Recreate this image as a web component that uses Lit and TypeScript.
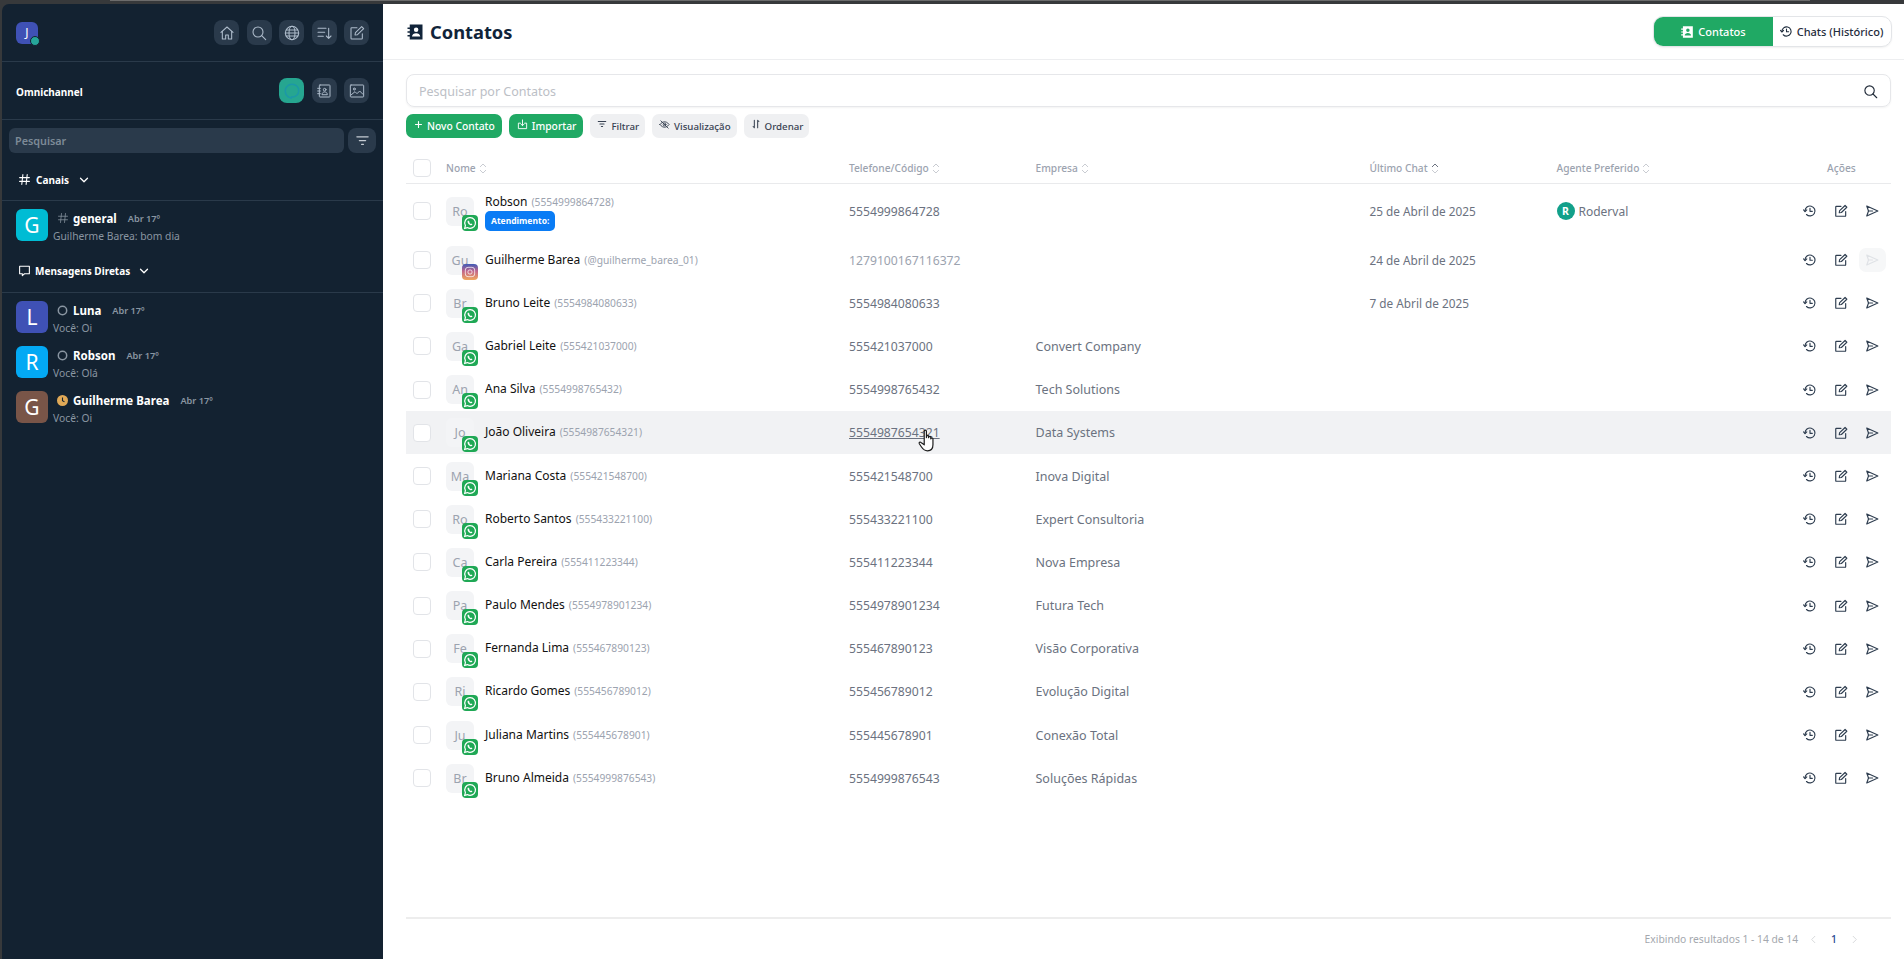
import { LitElement, html, css, svg } from 'lit';
import { customElement } from 'lit/decorators.js';

const ico = (body: unknown, size = 16, sw = 1.8) => html`<svg width=${size} height=${size} viewBox="0 0 24 24" fill="none" stroke="currentColor" stroke-width=${sw} stroke-linecap="round" stroke-linejoin="round">${body}</svg>`;

const home = svg`<path d="M3 11 12 3l9 8"/><path d="M5 9.5V21h5v-6h4v6h5V9.5"/>`;
const search = svg`<circle cx="10.5" cy="10.5" r="7.5"/><path d="m16 16 6 6"/>`;
const globe = svg`<circle cx="12" cy="12" r="10"/><path d="M2 12h20M3.5 7.5h17M3.5 16.5h17"/><ellipse cx="12" cy="12" rx="4.5" ry="10"/>`;
const sortDown = svg`<path d="M3 5h12M3 11h10M3 17h8M19 5v15M15.5 16.5 19 20l3.5-3.5"/>`;
const edit = svg`<path d="M20 13v7a1 1 0 0 1-1 1H4a1 1 0 0 1-1-1V5a1 1 0 0 1 1-1h8"/><path d="M9 15l.7-3.6L19 2.5l3 3-9.3 9z"/>`;
const chat = svg`<path d="M12 3c5 0 9 3.5 9 8.5S17 20 12 20h-1v1.500C6 20 3 16 3 11.500S7 3 12 3z"/>`;
const book = svg`<rect x="5" y="3" width="16" height="18" rx="1"/><path d="M2.500 8h4M2.500 12h4M2.500 16h4"/><circle cx="13" cy="10" r="2"/><path d="M9 17c0-5 8-5 8 0z"/>`;
const image = svg`<rect x="2" y="3" width="20" height="18" rx="1"/><circle cx="8" cy="9" r="1.500"/><path d="m3 18 6-5 3 3 4-4 5 5"/>`;
const filter = svg`<path d="M3 6h18M7 12h10M10.500 18h3"/>`;
const hash = svg`<path d="M9 3 7 21M17 3l-2 18M3 8.500h18M3 15.500h18"/>`;
const chevronDown = svg`<path d="m5 8.500 7 7 7-7"/>`;
const message = svg`<path d="M3 4h18v14h-9l-4 3.500V18H3z"/>`;
const history = svg`<path d="M3.500 12a8.500 8.500 0 1 1 2.500 6"/><path d="M1 10l2.500 3L6.500 10"/><path d="M12 7.500V12.500h4"/>`;
const send = svg`<path d="M3 3.500 22 12 3 20.500 6 12z"/><path d="M6 12h7"/>`;
const plus = svg`<path d="M12 4v16M4 12h16"/>`;
const importIco = svg`<path d="M7 9H3v12h18V9h-4"/><path d="M12 2v12M8 10.500l4 4 4-4"/>`;
const eyeOff = svg`<path d="M2 12s4-6 10-6 10 6 10 6-4 6-10 6-10-6-10-6z"/><circle cx="12" cy="12" r="3"/><path d="M4 4l16 16"/>`;
const sortArrows = svg`<path d="M8 3v18M8 21l-3-3M16 21V3M16 3l3 3"/>`;

const bookPath = svg`<path d="M5 2h17v20H5v-4H2v-2h3v-3H2v-2h3V8H2V6h3zm8.500 4a3 3 0 1 0 0 6 3 3 0 0 0 0-6zM8 18h11c0-6-11-6-11 0z" fill-rule="evenodd"/>`;
const bookSolid = (size: number) => html`<svg width=${size} height=${size} viewBox="0 0 24 24" fill="currentColor">${bookPath}</svg>`;
const sortCaret = html`<svg width="8" height="11" viewBox="0 0 8 11" fill="none" stroke="#c9ccd2" stroke-width="1"><path d="M1 4 4 1l3 3M1 7l3 3 3-3"/></svg>`;
const sortUp = html`<svg width="8" height="11" viewBox="0 0 8 11" fill="none" stroke="#6b7280" stroke-width="1"><path d="M1 4 4 1l3 3"/><path stroke="#c9ccd2" d="M1 7l3 3 3-3"/></svg>`;
const whats = svg`<path d="M12 4a8 8 0 0 0-6.900 12L4 20l4.100-1.100A8 8 0 1 0 12 4z" fill="none" stroke="#fff" stroke-width="1.800"/><path d="M9.300 8.200c-.9.600-1.200 1.700-.7 3 .7 1.900 2.300 3.400 4.200 4.100 1.300.4 2.400 0 2.900-.9l-1.700-1.500-1 .6c-.9-.4-1.700-1.200-2.100-2.100l.6-1z" fill="#fff"/>`;
const insta = svg`<rect x="5" y="5" width="14" height="14" rx="4" fill="none" stroke="#fff" stroke-opacity=".7" stroke-width="1.500"/><circle cx="12" cy="12" r="3.200" fill="none" stroke="#fff" stroke-opacity=".7" stroke-width="1.500"/>`;

interface Contact { name: string; ref: string; phone: string; company?: string; last?: string; agent?: string; channel?: 'wa' | 'ig'; tag?: string; hover?: boolean; off?: boolean; }

const contacts: Contact[] = [
  { name: 'Robson', ref: '(5554999864728)', phone: '5554999864728', last: '25 de Abril de 2025', agent: 'Roderval', tag: 'Atendimento:' },
  { name: 'Guilherme Barea', ref: '(@guilherme_barea_01)', phone: '1279100167116372', last: '24 de Abril de 2025', channel: 'ig', off: true },
  { name: 'Bruno Leite', ref: '(5554984080633)', phone: '5554984080633', last: '7 de Abril de 2025' },
  { name: 'Gabriel Leite', ref: '(555421037000)', phone: '555421037000', company: 'Convert Company' },
  { name: 'Ana Silva', ref: '(5554998765432)', phone: '5554998765432', company: 'Tech Solutions' },
  { name: 'João Oliveira', ref: '(5554987654321)', phone: '5554987654321', company: 'Data Systems', hover: true },
  { name: 'Mariana Costa', ref: '(555421548700)', phone: '555421548700', company: 'Inova Digital' },
  { name: 'Roberto Santos', ref: '(555433221100)', phone: '555433221100', company: 'Expert Consultoria' },
  { name: 'Carla Pereira', ref: '(555411223344)', phone: '555411223344', company: 'Nova Empresa' },
  { name: 'Paulo Mendes', ref: '(5554978901234)', phone: '5554978901234', company: 'Futura Tech' },
  { name: 'Fernanda Lima', ref: '(555467890123)', phone: '555467890123', company: 'Visão Corporativa' },
  { name: 'Ricardo Gomes', ref: '(555456789012)', phone: '555456789012', company: 'Evolução Digital' },
  { name: 'Juliana Martins', ref: '(555445678901)', phone: '555445678901', company: 'Conexão Total' },
  { name: 'Bruno Almeida', ref: '(5554999876543)', phone: '5554999876543', company: 'Soluções Rápidas' },
];

const directs = [
  { l: 'L', color: '#3f51b5', name: 'Luna', msg: 'Você: Oi', status: 'off' },
  { l: 'R', color: '#03a9f4', name: 'Robson', msg: 'Você: Olá', status: 'off' },
  { l: 'G', color: '#795548', name: 'Guilherme Barea', msg: 'Você: Oi', status: 'away' },
];

@customElement('app-root')
export class AppRoot extends LitElement {
  static styles = css`
    :host {
      display: flex;
      flex-direction: column;
      height: 959px;
      overflow: hidden;
      background: linear-gradient(90deg, #37393b 110px, #6c6c6c 110px, #6c6c6c 1810px, #37393b 1810px) 0 0 / 100% 1px no-repeat, #37393b;
      padding-top: 4px;
      box-sizing: border-box;
      font-family: "Noto Sans", "Open Sans", sans-serif;
      font-size: 13px;
    }
    * { box-sizing: border-box; }
    .shell { display: flex; flex: 1; min-height: 0; padding-left: 2px; }

    /* sidebar */
    .side { width: 381px; background: #132231; border-top-left-radius: 7px; color: #fff; display: flex; flex-direction: column; }
    .side-top { height: 58px; border-bottom: 1px solid #2a3a4a; display: flex; align-items: center; justify-content: space-between; padding: 0 14px; }
    .me { position: relative; width: 22px; height: 22px; border-radius: 6px; background: #3f51b5; display: flex; align-items: center; justify-content: center; font-size: 12px; }
    .me i { position: absolute; right: -2px; bottom: -2px; width: 10px; height: 10px; border-radius: 50%; background: #26a69a; border: 1px solid #132231; }
    .btns { display: flex; gap: 7.500px; }
    .ib { width: 25px; height: 25px; border-radius: 8px; background: #2a3a4b; color: #aebccb; display: flex; align-items: center; justify-content: center; }
    .ib.on { background: #26a690; color: #1c98a8; }
    .side-sec { height: 58px; border-bottom: 1px solid #2a3a4a; display: flex; align-items: center; justify-content: space-between; padding: 0 14px; font-size: 10px; font-weight: 700; }
    .side-sec span { padding-top: 2px; }
    .side-search { display: flex; gap: 4px; padding: 8px 7px 0; }
    .side-search .f { flex: 1; height: 25px; border-radius: 6px; background: #2a3a4b; color: #7d8a97; font-size: 10.800px; font-weight: 600; padding: 0 6px; display: flex; align-items: center; }
    .side-search .b { width: 28px; height: 25px; border-radius: 8px; background: #2a3a4b; color: #c5ccd3; display: flex; align-items: center; justify-content: center; }
    .group { display: flex; align-items: center; gap: 5px; height: 48px; padding: 6px 0 0 16px; border-bottom: 1px solid #2a3a4a; font-size: 10px; font-weight: 700; }
    .group.dm { height: 50px; margin-top: 2px; gap: 4px; }
    .group .ch { margin-left: 4px; display: flex; }
    .item { display: flex; gap: 5px; padding: 0 14px; margin-top: 13px; height: 32px; }
    .group + .item { margin-top: 8px; }
    .av { width: 32px; height: 32px; border-radius: 6px; display: flex; align-items: center; justify-content: center; font-size: 21px; color: #fff; flex: none; }
    .lines { display: flex; flex-direction: column; justify-content: space-between; min-width: 0; height: 34px; }
    .l1 { display: flex; align-items: center; height: 18px; padding-left: 4px; }
    .st { width: 16px; display: flex; color: #8a96a2; }
    .nm { font-size: 11.500px; font-weight: 700; }
    .when { font-size: 9.200px; font-weight: 600; color: #8a96a2; margin-left: 11px; }
    .msg { font-size: 10.300px; color: #8a96a2; line-height: 14px; }

    /* main */
    .main { flex: 1; background: #fff; display: flex; flex-direction: column; min-width: 0; }
    .top { height: 56px; flex: none; border-bottom: 1px solid #edeef0; display: flex; align-items: center; justify-content: space-between; padding: 0 12.500px 0 23px; }
    .title { display: flex; align-items: center; gap: 6px; font-size: 18.300px; font-weight: 700; color: #11243a; }
    .tabs { display: flex; height: 31px; width: 239px; border-radius: 10px; border: 1px solid #e3e5e8; box-shadow: 0 1px 2px rgba(0,0,0,.06); overflow: hidden; font-size: 11px; color: #1f2d3d; font-weight: 500; }
    .tabs div { flex: 1; display: flex; align-items: center; justify-content: center; gap: 4px; white-space: nowrap; }
    .tabs .act { flex: none; width: 119px; background: #20a964; color: #fff; }
    .body { flex: 1; min-height: 0; display: flex; flex-direction: column; padding: 14px 13px 0 23px; }
    .search { height: 33px; flex: none; border: 1px solid #e6e7ea; border-radius: 8px; box-shadow: 0 1px 2px rgba(0,0,0,.05); display: flex; align-items: center; justify-content: space-between; padding: 1px 12px 0; color: #bcc0c6; font-size: 12.500px; }
    .search span { color: #1f2937; display: flex; }
    .tools { display: flex; gap: 7px; margin-top: 7px; flex: none; }
    .tool { height: 24px; border-radius: 7px; background: #eff0f2; color: #374151; display: flex; align-items: center; gap: 4px; padding: 0 6px 0 7px; font-size: 9.700px; font-weight: 500; }
    .tool svg { transform: translateY(-2px); }
    .tool.green { background: #20a964; color: #fff; font-size: 10.300px; padding: 0 7px 0 8px; }
    .grid { display: grid; grid-template-columns: 40px 403px 186.500px 334px 187px 1fr 111px; align-items: center; }
    .head { height: 31px; margin-top: 15px; border-bottom: 1px solid #e9eaec; color: #9ca3af; font-size: 10.200px; font-weight: 500; flex: none; }
    .head .c { display: flex; align-items: center; gap: 3px; }
    .head .acts { padding-left: 47px; }
    .box { width: 18px; height: 18px; margin-left: 7px; border: 1px solid #e2e4e8; border-radius: 4px; background: #fff; }
    .row { height: 43.200px; font-size: 12.500px; color: #6b7280; flex: none; }
    .row.first { height: 54.500px; }
    .row.hover { background: #f1f2f4; }
    .phone { font-size: 12.200px; position: relative; }
    .phone.dim { color: #9ca3af; }
    .date { font-size: 11.800px; }
    .row.hover .phone span { text-decoration: underline; }
    .hand { position: absolute; left: 69px; top: 5px; }
    .name { display: flex; align-items: center; gap: 11px; }
    .pic { position: relative; width: 28px; height: 29px; border-radius: 6px; background: #f3f4f6; color: #9ca3af; display: flex; align-items: center; justify-content: center; font-size: 12.500px; flex: none; }
    .badge { position: absolute; right: -4px; bottom: -5px; width: 16px; height: 16px; border-radius: 4px; background: #1fa855; display: flex; }
    .badge.ig { background: linear-gradient(180deg, #3f5bb8 0%, #c2668a 45%, #f0a85c 100%); }
    .who { padding-bottom: 1px; }
    .who.tagged { padding: 1px 0 0; }
    .nm2 { color: #111; font-size: 12px; display: flex; align-items: baseline; gap: 4px; line-height: 18px; }
    .nm2 small { color: #9ca3af; font-size: 10.250px; }
    .tag { display: block; width: max-content; height: 20px; line-height: 20px; border-radius: 5px; background: #0a7cf5; color: #fff; font-size: 8.500px; font-weight: 700; padding: 0 6px; }
    .agent { display: flex; align-items: center; gap: 4px; font-size: 12px; }
    .agent b { width: 18px; height: 18px; border-radius: 50%; background: #12a08a; color: #fff; font-size: 10.500px; display: flex; align-items: center; justify-content: center; }
    .acts-row { display: flex; align-items: center; color: #2f3e50; padding-left: 14.500px; }
    .acts-row div { width: 31px; height: 24px; display: flex; align-items: center; justify-content: center; border-radius: 7px; }
    .acts-row .dis { width: 27px; margin-left: 2px; background: #f6f7f8; color: #dfe2e6; }
    .foot { margin-top: auto; height: 42px; flex: none; border-top: 2px solid #ededed; display: flex; align-items: center; justify-content: flex-end; gap: 10px; font-size: 10.300px; color: #a4a8ae; padding-right: 31px; }
    .foot .pg { color: #24478f; font-weight: 500; margin: 0 2px; }
    .foot svg { color: #d4d6d9; }
  `;

  private renderItem(av: string, color: string, st: unknown, name: string, msg: string) {
    return html`<div class="item">
      <div class="av" style="background:${color}">${av}</div>
      <div class="lines">
        <div class="l1"><span class="st">${st}</span><span class="nm">${name}</span><span class="when">Abr 17º</span></div>
        <div class="msg">${msg}</div>
      </div>
    </div>`;
  }

  private renderContact(c: Contact, i: number) {
    const cls = `grid row${i === 0 ? ' first' : ''}${c.hover ? ' hover' : ''}`;
    return html`<div class=${cls}>
      <div><div class="box"></div></div>
      <div class="name">
        <div class="pic">${c.name.slice(0, 2)}
          <span class="badge ${c.channel === 'ig' ? 'ig' : ''}"><svg width="16" height="16" viewBox="0 0 24 24">${c.channel === 'ig' ? insta : whats}</svg></span>
        </div>
        <div class="who ${c.tag ? 'tagged' : ''}">
          <div class="nm2">${c.name} <small>${c.ref}</small></div>
          ${c.tag ? html`<span class="tag">${c.tag}</span>` : ''}
        </div>
      </div>
      <div class="phone ${c.off ? 'dim' : ''}"><span>${c.phone}</span>${c.hover ? html`<svg class="hand" width="19" height="24" viewBox="0 0 17 22"><path d="M5.500 2c0-1.300 2-1.300 2 0v6l.3-1.500c.3-1 1.700-.8 1.700.3V8l.3-.8c.4-.9 1.700-.6 1.700.4V9l.4-.5c.5-.6 1.600-.3 1.600.6v5.400c0 3.500-2 5.500-5 5.500-3 0-4-1.200-5.500-3.500L1 13.500c-.6-1 .6-2 1.500-1.200L5.500 14.500z" fill="#fff" stroke="#1c1c1c" stroke-width="1.100" stroke-linejoin="round"/></svg>` : ''}</div>
      <div>${c.company ?? ''}</div>
      <div class="date">${c.last ?? ''}</div>
      <div>${c.agent ? html`<div class="agent"><b>R</b>${c.agent}</div>` : ''}</div>
      <div class="acts-row">
        <div>${ico(history, 14, 2)}</div>
        <div>${ico(edit, 14, 2)}</div>
        <div class=${c.off ? 'dis' : ''}>${ico(send, 14, 2)}</div>
      </div>
    </div>`;
  }

  render() {
    return html`<div class="shell">
      <aside class="side">
        <div class="side-top">
          <div class="me">J<i></i></div>
          <div class="btns">
            ${[home, search, globe, sortDown, edit].map((p) => html`<div class="ib">${ico(p, 16, 1.600)}</div>`)}
          </div>
        </div>
        <div class="side-sec">
          <span>Omnichannel</span>
          <div class="btns">
            <div class="ib on">${ico(chat, 18, 2)}</div>
            <div class="ib">${ico(book, 16, 1.500)}</div>
            <div class="ib">${ico(image, 16, 1.500)}</div>
          </div>
        </div>
        <div class="side-search">
          <div class="f">Pesquisar</div>
          <div class="b">${ico(filter, 15, 2)}</div>
        </div>
        <div class="group">${ico(hash, 13, 2)}<span>Canais</span><span class="ch">${ico(chevronDown, 12, 2.500)}</span></div>
        ${this.renderItem('G', '#00bcd4', ico(hash, 12, 1.500), 'general', 'Guilherme Barea: bom dia')}
        <div class="group dm">${ico(message, 13, 2)}<span>Mensagens Diretas</span><span class="ch">${ico(chevronDown, 12, 2.500)}</span></div>
        ${directs.map((d) => this.renderItem(d.l, d.color, d.status === 'off'
          ? html`<svg width="11" height="11" viewBox="0 0 11 11" fill="none" stroke="#8a96a2" stroke-width="1.500"><circle cx="5.500" cy="5.500" r="4.200"/></svg>`
          : html`<svg width="11" height="11" viewBox="0 0 11 11"><circle cx="5.500" cy="5.500" r="5.500" fill="#e0a957"/><path d="M5.500 2.500v3.200l2 1.200" fill="none" stroke="#132231" stroke-width="1.100"/></svg>`, d.name, d.msg))}
      </aside>
      <main class="main">
        <div class="top">
          <div class="title">${bookSolid(18)}<span>Contatos</span></div>
          <div class="tabs">
            <div class="act">${bookSolid(14)}Contatos</div>
            <div>${ico(history, 13, 2)}Chats (Histórico)</div>
          </div>
        </div>
        <div class="body">
          <div class="search">Pesquisar por Contatos<span>${ico(search, 15, 1.800)}</span></div>
          <div class="tools">
            <div class="tool green">${ico(plus, 9, 3)}Novo Contato</div>
            <div class="tool green">${ico(importIco, 11, 2)}Importar</div>
            <div class="tool">${ico(filter, 10, 2.500)}Filtrar</div>
            <div class="tool">${ico(eyeOff, 11, 2)}Visualização</div>
            <div class="tool">${ico(sortArrows, 10, 2.500)}Ordenar</div>
          </div>
          <div class="grid head">
            <div><div class="box"></div></div>
            <div class="c">Nome ${sortCaret}</div>
            <div class="c">Telefone/Código ${sortCaret}</div>
            <div class="c">Empresa ${sortCaret}</div>
            <div class="c">Último Chat ${sortUp}</div>
            <div class="c">Agente Preferido ${sortCaret}</div>
            <div class="acts">Ações</div>
          </div>
          ${contacts.map((c, i) => this.renderContact(c, i))}
          <div class="foot">
            <span>Exibindo resultados 1 - 14 de 14</span>
            ${ico(svg`<path d="m15 5-7 7 7 7"/>`, 11, 2)}
            <span class="pg">1</span>
            ${ico(svg`<path d="m9 5 7 7-7 7"/>`, 11, 2)}
          </div>
        </div>
      </main>
    </div>`;
  }
}
